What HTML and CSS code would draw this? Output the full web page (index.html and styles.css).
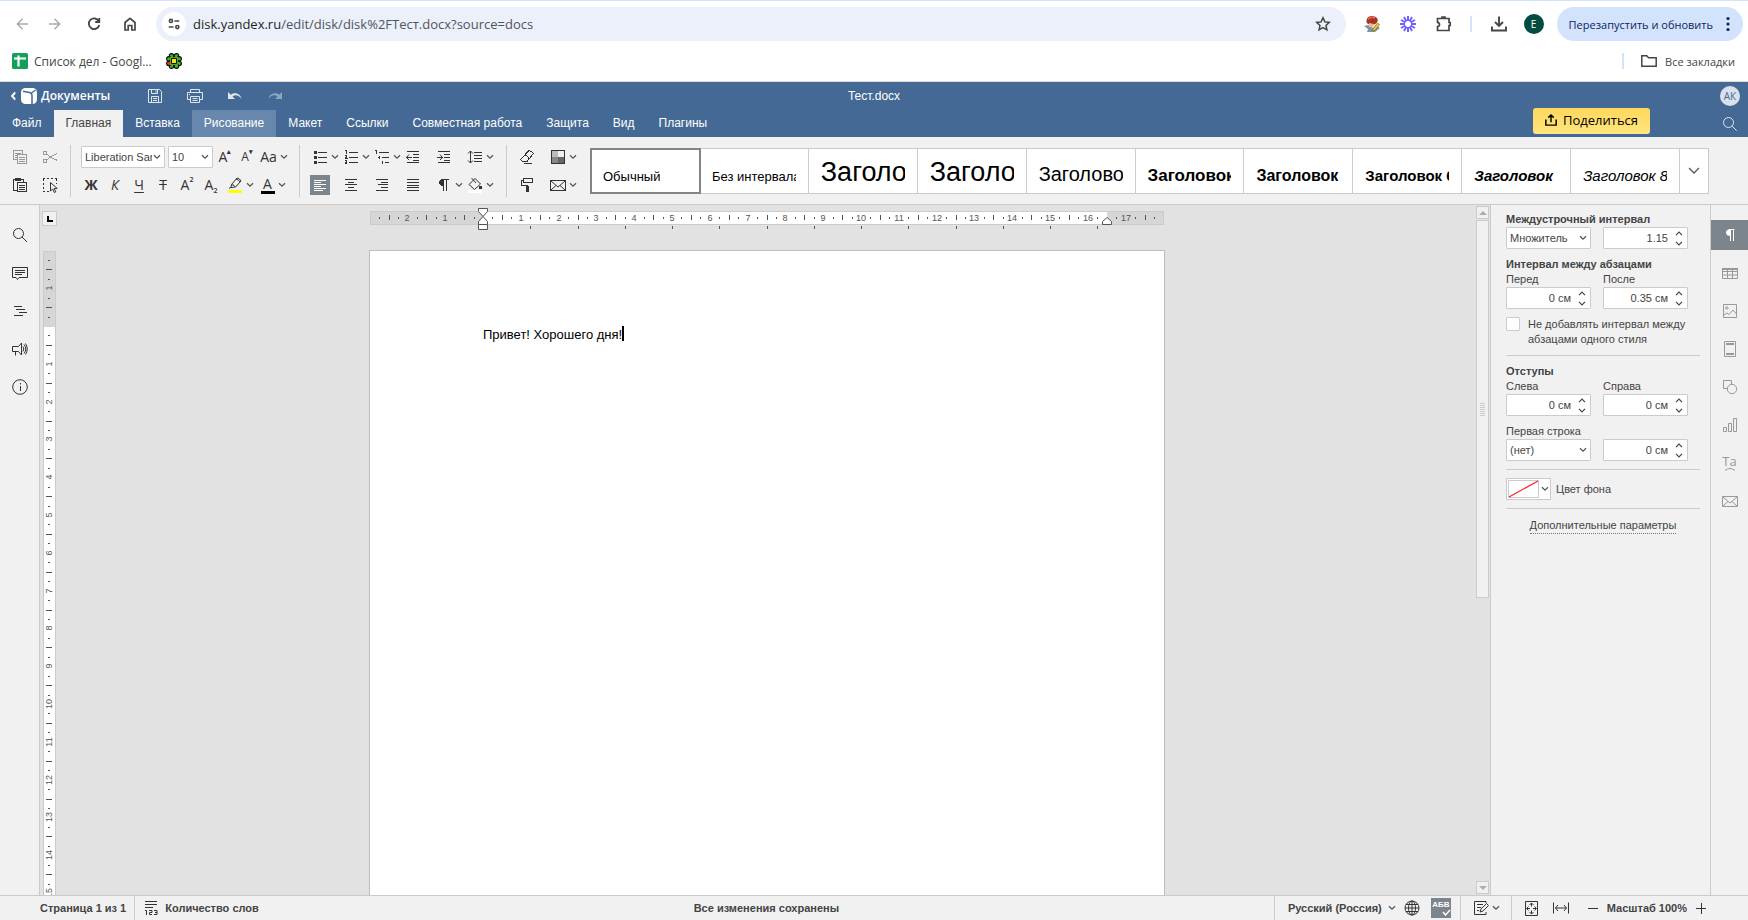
FILE: index.html
```html
<!DOCTYPE html>
<html lang="ru">
<head>
<meta charset="utf-8">
<title>Тест.docx</title>
<link rel="stylesheet" href="styles.css">
</head>
<body>
<svg class="defs" aria-hidden="true">
  <symbol id="caret" viewBox="0 0 8 6"><path d="M1 1.2 4 4.2 7 1.2" fill="none" stroke="#555" stroke-width="1.3"/></symbol>
  <symbol id="up" viewBox="0 0 8 5"><path d="M1 4.2 4 1.2 7 4.2" fill="none" stroke="#444" stroke-width="1.2"/></symbol>
  <symbol id="down" viewBox="0 0 8 5"><path d="M1 .8 4 3.8 7 .8" fill="none" stroke="#444" stroke-width="1.2"/></symbol>
</svg>

<div class="chrome">
  <div class="nav">
    <button class="nb off" aria-label="Назад"><svg viewBox="0 0 16 16"><path d="M14 8H3M8 2.5 2.500 8 8 13.500"/></svg></button>
    <button class="nb off" aria-label="Вперёд"><svg viewBox="0 0 16 16"><path d="M2 8h11M8 2.500 13.500 8 8 13.500"/></svg></button>
    <button class="nb reload" aria-label="Обновить"><svg viewBox="0 0 16 16"><path d="M12.800 5.200A5.300 5.300 0 1 0 13.300 9M13.300 2v4H9.200" stroke-width="1.800"/></svg></button>
    <button class="nb" aria-label="Домой"><svg viewBox="0 0 16 16"><path d="M3 14V6.500L8 2.300l5 4.200V14H9.800V9.500H6.200V14Z" stroke-width="1.700"/></svg></button>
    <div class="omni">
      <button class="tune" aria-label="Сведения о сайте"><svg viewBox="0 0 16 16"><circle cx="4.500" cy="4.500" r="1.800"/><path d="M8.500 4.500H14M2 11.500h5.500"/><circle cx="11.800" cy="11.500" r="1.800"/></svg></button>
      <a class="url" href="#"><b>disk.yandex.ru</b>/edit/disk/disk%2FТест.docx?source=docs</a>
      <button class="nb star" aria-label="В закладки"><svg viewBox="0 0 16 16"><path d="m8 1.800 1.900 4.100 4.400.5-3.300 3 .9 4.400L8 11.600l-3.900 2.200.9-4.400-3.300-3 4.400-.5Z" stroke-width="1.500"/></svg></button>
    </div>
    <div class="exts">
      <button class="nb" aria-label="Расширение Ластик"><svg viewBox="0 0 16 16" class="plain"><path d="M0 10l4-1 5 3 4-2 3 2-5 4H3l1-3Z" fill="#7d96a6"/><path d="M2.500 4.500C3 1 6-.3 9.500.2 13 .7 14.300 3 13.500 5.500 12.500 8 10 9 8 8.500 5 9 2 7.500 2.500 4.500Z" fill="#a93226"/><path d="M4 3.500C6 1 9 1 11 2" stroke="#dc7361" stroke-width="1.500"/><path d="M5 7l5 1-.5 3L5 11Z" fill="#f0ba86"/><path d="m9 13 4.500-6 2 1.500-4.500 6-2.500.5Z" fill="#f3c332" stroke="#80641c" stroke-width=".7"/></svg></button>
      <button class="nb" aria-label="Расширение Звезда"><svg viewBox="0 0 16 16"><path stroke="#6c63ff" stroke-width="2" d="M8 0v5M8 11v5M0 8h5M11 8h5M4 1.100l2.500 4.300M9.500 10.600l2.500 4.300M1.100 4l4.300 2.500M10.600 9.500l4.300 2.500M12 1.100 9.500 5.400M6.500 10.600 4 14.900M14.900 4l-4.300 2.500M5.400 9.500 1.100 12"/></svg></button>
      <button class="nb" aria-label="Расширения"><svg viewBox="0 0 16 16"><path d="M1.500 2.500H13v4h1.200v3H13v5H1.500v-3.800q2-.3 2-2.200t-2-2.200ZM6 2.500V1h3v1.500" stroke-width="1.700"/></svg></button>
    </div>
    <i class="vline"></i>
    <button class="nb dl" aria-label="Загрузки"><svg viewBox="0 0 16 16"><path d="M8 .5v9M4 6l4 4 4-4M1 10.500v4h14v-4" stroke-width="1.900"/></svg></button>
    <button class="profile" aria-label="Профиль">E</button>
    <button class="update">Перезапустить и обновить <svg viewBox="0 0 4 16"><circle cx="2" cy="2.500" r="1.600"/><circle cx="2" cy="8" r="1.600"/><circle cx="2" cy="13.500" r="1.600"/></svg></button>
  </div>
  <div class="marks">
    <a href="#"><svg viewBox="0 0 16 16"><rect width="16" height="16" rx="1.500" fill="#12a05c"/><path d="M2 5.500h12M6.500 2.500v11" stroke="#fff" stroke-width="2.200"/></svg>Список дел - Googl...</a>
    <a href="#" class="flower" aria-label="Закладка"><svg viewBox="0 0 16 16"><g fill="#43b02a" stroke="#111" stroke-width="1.100"><circle cx="5.500" cy="2.800" r="2.200"/><circle cx="10.500" cy="2.800" r="2.200"/><circle cx="2.800" cy="5.800" r="2.200"/><circle cx="13.200" cy="5.800" r="2.200"/><circle cx="13.200" cy="10.400" r="2.200"/><circle cx="5.500" cy="13.200" r="2.200"/><circle cx="10.500" cy="13.200" r="2.200"/><circle cx="2.800" cy="10.400" r="2.200" fill="#f0351b"/></g><path d="M4 4h8v8H4Z" fill="#43b02a"/><path d="M5.500 5.500h5v5h-5Z" fill="#ffe600" stroke="#111"/></svg></a>
    <i class="vline"></i>
    <a href="#" class="all"><svg viewBox="0 0 16 16" fill="none" stroke="#444746" stroke-width="1.500"><path d="M.8 2.800h5l1.700 2h7.700v8.400H.8Z"/></svg>Все закладки</a>
  </div>
</div>

<header class="head">
  <div class="top">
    <a class="brand" href="#"><svg class="back" viewBox="0 0 5 10"><path d="M4.200 1.500 1 5l3.200 3.500" fill="none" stroke="#fff" stroke-width="1.900"/></svg><svg class="logo" viewBox="0 0 16 16"><rect width="16" height="16" rx="4.500" fill="#fff"/><path d="M2 3.200 8.500 4.500q2.500.6 2.500 3V16" fill="none" stroke="#446995" stroke-width="1.500"/><path d="M10.500 5 14.500 2" fill="none" stroke="#446995" stroke-width="1.300"/></svg>Документы</a>
    <div class="quick">
      <button class="save" aria-label="Сохранить"><svg viewBox="0 0 14 14"><path d="M.5.5h11l2 2v11H.5ZM3.500.5v4h6v-4M3.500 13.500V7.500h7v6M5 9.500h4M5 11.500h4M8 1.500v2"/></svg></button>
      <button class="print" aria-label="Печать"><svg viewBox="0 0 16 14"><path d="M3.500 3.500V.5h9v3M3.500 10.500h-3v-7h15v7h-3M3.500 7.500h9v6h-9ZM2 5.500h1M5.500 9.500h5M5.500 11.500h5"/></svg></button>
      <button aria-label="Отменить"><svg viewBox="0 0 14 10"><path d="M0 1v7h7L4.500 5.500C7 3.500 11 4 13.500 8 12.500 3 7.500.5 2.800 3.800Z" fill="#dfe6ee" stroke="none"/></svg></button>
      <button aria-label="Повторить" disabled><svg viewBox="0 0 14 10"><path d="M14 1v7H7l2.500-2.500C7 3.500 3 4 .5 8 1.500 3 6.500.5 11.200 3.800Z" fill="#8fa5bf" stroke="none"/></svg></button>
    </div>
    <h1>Тест.docx</h1>
    <span class="user">АК</span>
  </div>
  <div class="tabrow">
    <nav class="tabs"><button>Файл</button><button class="on">Главная</button><button>Вставка</button><button class="hov">Рисование</button><button>Макет</button><button>Ссылки</button><button>Совместная работа</button><button>Защита</button><button>Вид</button><button>Плагины</button></nav>
    <button class="share"><svg viewBox="0 0 14 14"><path d="M7 9.500V1.500M3.800 4.200 7 1.200l3.200 3M1 6.500V13h12V6.500" fill="none" stroke="#000" stroke-width="1.700"/></svg>Поделиться</button>
    <button class="find" aria-label="Поиск"><svg viewBox="0 0 14 14"><circle cx="5.500" cy="5.500" r="5" /><path d="m9.200 9.200 4.500 4.500"/></svg></button>
  </div>
</header>

<section class="bar">
  <div class="grp clip">
    <div class="row"><button class="off" aria-label="Копировать"><svg viewBox="0 0 16 16"><path d="M5 10.500H1.500v-9h9V5M3 4.500h6M3 6.500h1.500M3 8.500h1.500M5.500 5.500h9v9h-9ZM7 8.500h6M7 10.500h6M7 12.500h6"/></svg></button><button class="off" aria-label="Вырезать"><svg viewBox="0 0 16 16" class="soft"><circle cx="3" cy="4" r="2"/><circle cx="3" cy="12" r="2"/><path d="M5 4.800 8 8l7.500 3.500M5 11.200 8 8l7.500-3.500"/></svg></button></div>
    <div class="row"><button aria-label="Вставить"><svg viewBox="0 0 16 16"><path d="M5 13.500H1.500v-11H3M9 2.500h2.500V5M5.500 5.500h9v9h-9ZM7 8.500h6M7 10.500h6M7 12.500h6"/><path d="M3 1h6v3H3Z" fill="#333" stroke="none"/></svg></button><button aria-label="Выделить"><svg viewBox="0 0 16 16"><path d="M1 1.500h14M1.500 2v12M14.500 2v5M1 14.500h7" stroke-dasharray="2 2"/><path d="M8.500 5.500v8.500l2.200-2 1.600 3.500 1.500-.7-1.600-3.300h3Z" class="soft" fill="#f1f1f1"/></svg></button></div>
  </div>
  <i class="sep"></i>
  <div class="grp font">
    <div class="row">
      <span class="combo fam"><select aria-label="Шрифт"><option>Liberation Sans</option></select><svg class="ca"><use href="#caret"/></svg></span>
      <span class="combo size"><select aria-label="Размер шрифта"><option>10</option></select><svg class="ca"><use href="#caret"/></svg></span>
      <button class="t w24" aria-label="Увеличить размер">A<sup>▴</sup></button><button class="t w20 sm" aria-label="Уменьшить размер">A<sup>▾</sup></button><button class="t drop" aria-label="Регистр">Aa<svg class="ca"><use href="#caret"/></svg></button>
    </div>
    <div class="row">
      <button class="t w24 b">Ж</button><button class="t w24 it">К</button><button class="t w24 un">Ч</button><button class="t w24 st">Т</button><button class="t w24">A<sup>2</sup></button><button class="t w24">A<sub>2</sub></button><button class="drop" aria-label="Цвет выделения"><svg viewBox="0 0 16 16"><path class="soft" d="M4.500 7.500 10 1q3 .5 4 3L8.500 10 4 10.500ZM4.500 7.500q3 .5 4 2.500M9 2q3 .8 4 3M4 10 2 11.500"/><path d="M1 13h14v3H1Z" fill="#ff0" stroke="none"/></svg><svg class="ca"><use href="#caret"/></svg></button><button class="drop fc" aria-label="Цвет шрифта"><span>A</span><svg class="ca"><use href="#caret"/></svg></button>
    </div>
  </div>
  <i class="sep"></i>
  <div class="grp para">
    <div class="row">
      <button aria-label="Маркеры"><svg viewBox="0 0 16 16"><path d="M6 3.500h9M6 8.500h9M6 13.500h9"/><path d="M2 2h3v3H2ZM2 7h3v3H2ZM2 12h3v3H2Z" fill="#333" stroke="none"/></svg><svg class="ca"><use href="#caret"/></svg></button>
      <button aria-label="Нумерация"><svg viewBox="0 0 16 16"><path d="M6 3.500h9M6 8.500h9M6 13.500h9M2 1.500h1.500V5M1.500 6.500h2v2h-1v1h2M1.500 11.500h2v3h-2M2 13.500h1"/></svg><svg class="ca"><use href="#caret"/></svg></button>
      <button aria-label="Многоуровневый список"><svg viewBox="0 0 16 16"><path d="M5 3.500h10M8 8.500h7M11 13.500h4M1 1.500h1.500V5M5 7v3M4 8.500h2M8.500 12v3"/></svg><svg class="ca"><use href="#caret"/></svg></button>
      <button aria-label="Уменьшить отступ"><svg viewBox="0 0 16 16"><path d="M2 2.500h12M8 5.500h6M8 8.500h6M8 11.500h6M2 13.500h12M1 8.500h6"/><path class="soft" d="M4 5.500 1.500 8.500 4 11"/></svg></button>
      <button aria-label="Увеличить отступ"><svg viewBox="0 0 16 16"><path d="M2 2.500h12M8 5.500h6M8 8.500h6M8 11.500h6M2 13.500h12M1 8.500h6"/><path class="soft" d="M4 5.500 6.500 8.500 4 11"/></svg></button>
      <button aria-label="Междустрочный интервал"><svg viewBox="0 0 16 16"><path d="M7 3.500h8M7 6.500h8M7 9.500h8M7 12.500h8M3.500 2v12"/><path class="soft" d="M1 4.500 3.500 2 6 4.500M1 11.500 3.500 14 6 11.500"/></svg><svg class="ca"><use href="#caret"/></svg></button>
    </div>
    <div class="row">
      <button class="act" aria-label="По левому краю"><svg viewBox="0 0 16 16"><path d="M2 3.500h12M2 5.500h7M2 7.500h12M2 9.500h7M2 11.500h12M2 13.500h9"/></svg></button>
      <button aria-label="По центру"><svg viewBox="0 0 16 16"><path d="M2 2.500h12M5 5.500h6M2 7.500h12M5 10.500h6M2 13.500h12"/></svg></button>
      <button aria-label="По правому краю"><svg viewBox="0 0 16 16"><path d="M2 2.500h12M7 5.500h7M4 7.500h10M7 10.500h7M2 13.500h12"/></svg></button>
      <button aria-label="По ширине"><svg viewBox="0 0 16 16"><path d="M2 2.500h12M2 5.500h12M2 8.500h12M2 10.500h12M2 13.500h12"/></svg></button>
      <button aria-label="Непечатаемые символы"><svg viewBox="0 0 16 16"><path d="M7 2.500h6M7.500 2v12M10.500 2v12"/><path d="M8 2v7Q3 9 3 5.500T8 2Z" fill="#333" stroke="none"/></svg><svg class="ca"><use href="#caret"/></svg></button>
      <button aria-label="Заливка"><svg viewBox="0 0 16 16"><path class="soft" d="M2 7.500 8 1.500l5.500 5.500-6 5.500ZM4.500 1 9 6"/><path d="M12 9h2.500v3H12Z" fill="#333" stroke="none"/><path d="M1 13h14v3H1Z" fill="#fff" stroke="none"/></svg><svg class="ca"><use href="#caret"/></svg></button>
    </div>
  </div>
  <i class="sep"></i>
  <div class="grp misc">
    <div class="row"><button aria-label="Очистить стиль"><svg viewBox="0 0 16 16" class="soft"><path d="M2 10 9.500 2q2.500-1 4.800 2.500L8 12.500H4Q1.500 12 2 10ZM6 6q3 .5 4 4M4.500 14.500H13"/></svg></button><button aria-label="Цветовая схема"><svg viewBox="0 0 16 16"><path d="M2 2h6v6H2Z" fill="#bbb" stroke="none"/><path d="M8 2h6v6H8Z" fill="#eee" stroke="none"/><path d="M2 8h6v6H2Z" fill="#888" stroke="none"/><path d="M8 8h6v6H8Z" fill="#666" stroke="none"/><path d="M1.500 1.500h13v13h-13Z"/></svg><svg class="ca"><use href="#caret"/></svg></button></div>
    <div class="row"><button aria-label="Копировать стиль"><svg viewBox="0 0 16 16"><path d="M4.500 1.500h9v4h-9ZM4 3.500H2.500v5h6V10"/><path d="M7 9h3v6H7Z" fill="#333" stroke="none"/></svg></button><button aria-label="Слияние"><svg viewBox="0 0 16 16"><path d="M.5 3.500h15v10H.5Z"/><path class="soft" d="m1 4 7 6 7-6M1 13l5-4.500M15 13l-5-4.500"/></svg><svg class="ca"><use href="#caret"/></svg></button></div>
  </div>
  <div class="gallery">
    <button class="s0 sel"><span>Обычный</span></button><button class="s0"><span>Без интервала</span></button><button class="s1"><span>Заголовок 1</span></button><button class="s1"><span>Заголовок 2</span></button><button class="s3"><span>Заголовок 3</span></button><button class="s4"><span>Заголовок 4</span></button><button class="s5"><span>Заголовок 5</span></button><button class="s6"><span>Заголовок 6</span></button><button class="s7"><span>Заголовок 7</span></button><button class="s8"><span>Заголовок 8</span></button><button class="more" aria-label="Ещё стили"><svg viewBox="0 0 12 8"><path d="m1 1 5 5 5-5" fill="none" stroke="#555" stroke-width="1.300"/></svg></button>
  </div>
</section>

<main class="work">
  <aside class="left">
    <button aria-label="Поиск"><svg viewBox="0 0 16 16"><circle cx="6.500" cy="6.500" r="5"/><path d="m10 10 5 5"/></svg></button>
    <button aria-label="Комментарии"><svg viewBox="0 0 16 16"><path d="M.5 2.500h15v10H7l-1.500 2-1.500-2H.5ZM3 5.500h10M3 7.500h10M3 9.500h7"/></svg></button>
    <button aria-label="Заголовки"><svg viewBox="0 0 16 16"><path d="M2 3.500h8M4 6.500h9M7 9.500h8M2 12.500h9"/></svg></button>
    <button aria-label="Обратная связь"><svg viewBox="0 0 16 16"><path d="M.5 5.500h6l3-3.500v12l-3-3.500h-6ZM3.500 10.500v4M11 5.500q1.500 2.500 0 5M12 3.500q3.500 4.500 0 9M13.500 2.500q3.500 5.500 0 11"/></svg></button>
    <button aria-label="О программе"><svg viewBox="0 0 16 16"><circle cx="8" cy="8" r="7.300"/><path d="M8.500 7v5M8.500 4v1.500"/></svg></button>
  </aside>
  <div class="editor">
    <div class="corner"><svg viewBox="0 0 6 6"><path d="M0 0h2v4h4v2H0Z"/></svg></div>
    <div class="hr"><svg id="hruler" width="796" height="30"></svg></div>
    <div class="vr"><svg id="vruler" width="13" height="644"></svg></div>
    <div class="canvas"><article class="page"><p>Привет! Хорошего дня!<i class="cur"></i></p></article></div>
    <div class="scroll"><button aria-label="Вверх"><svg viewBox="0 0 8 4"><path d="M0 4 4 0l4 4Z"/></svg></button><div class="thumb"><i></i></div><button class="dn" aria-label="Вниз"><svg viewBox="0 0 8 4"><path d="M0 0h8L4 4Z"/></svg></button></div>
  </div>
  <aside class="panel">
    <h2>Междустрочный интервал</h2>
    <div class="pair"><span class="combo"><select aria-label="Междустрочный интервал"><option>Множитель</option></select><svg class="ca"><use href="#caret"/></svg></span><span class="spin"><input aria-label="Значение интервала" value="1.15"><svg><use href="#up"/></svg><svg><use href="#down"/></svg></span></div>
    <h2 class="gap">Интервал между абзацами</h2>
    <div class="pair"><label for="b">Перед</label><label for="a">После</label></div>
    <div class="pair"><span class="spin"><input id="b" value="0 см"><svg><use href="#up"/></svg><svg><use href="#down"/></svg></span><span class="spin"><input id="a" value="0.35 см"><svg><use href="#up"/></svg><svg><use href="#down"/></svg></span></div>
    <label class="chk"><input type="checkbox">Не добавлять интервал между абзацами одного стиля</label>
    <hr>
    <h2>Отступы</h2>
    <div class="pair"><label for="l">Слева</label><label for="r">Справа</label></div>
    <div class="pair"><span class="spin"><input id="l" value="0 см"><svg><use href="#up"/></svg><svg><use href="#down"/></svg></span><span class="spin"><input id="r" value="0 см"><svg><use href="#up"/></svg><svg><use href="#down"/></svg></span></div>
    <div class="pair gap"><label for="f">Первая строка</label></div>
    <div class="pair"><span class="combo"><select id="f"><option>(нет)</option></select><svg class="ca"><use href="#caret"/></svg></span><span class="spin"><input aria-label="Отступ первой строки" value="0 см"><svg><use href="#up"/></svg><svg><use href="#down"/></svg></span></div>
    <hr>
    <div class="fill"><button id="bg" aria-label="Цвет фона"><svg viewBox="0 0 31 18"><path d="M.5.5h30v17H.5Z" fill="#fff" stroke="#cbcbcb"/><path d="M1 17 30 1" stroke="#f22" stroke-width="1.300"/></svg><svg class="ca"><use href="#caret"/></svg></button><label for="bg">Цвет фона</label></div>
    <hr>
    <a class="adv" href="#">Дополнительные параметры</a>
  </aside>
  <aside class="right">
    <button class="on" aria-label="Абзац"><svg viewBox="0 0 16 16"><path d="M7 2.500h5.500M8.500 2v12M11.500 2v12"/><path d="M9 2v7Q4 9 4 5.500T9 2Z" fill="#fff" stroke="none"/></svg></button>
    <button aria-label="Таблица"><svg viewBox="0 0 16 16"><path d="M.5 3.500h15v10H.5ZM0 6.500h16M0 10h16M5.500 3v10M10.500 3v10"/><path d="M0 3h16v2H0Z" fill="#999" stroke="none"/></svg></button>
    <button aria-label="Изображение"><svg viewBox="0 0 16 16"><path d="M1.500 1.500h13v13h-13ZM2 12l3-2 2 1.500 4-4.500 3.500 4"/><circle cx="4.800" cy="5" r="1.200"/></svg></button>
    <button aria-label="Колонтитулы"><svg viewBox="0 0 16 16"><path d="M2.500.5h11v15h-11Z"/><path d="M4 3h8M4 13h8" stroke-width="2"/></svg></button>
    <button aria-label="Фигура"><svg viewBox="0 0 16 16"><path d="M5 9.500H1.500v-8h8V5"/><circle cx="10" cy="10" r="4.700"/></svg></button>
    <button aria-label="Диаграмма"><svg viewBox="0 0 16 16"><path d="M1.500 10.500h3v4h-3ZM6.500 6.500h3v8h-3ZM11.500 1.500h3v13h-3Z"/></svg></button>
    <button class="ta" aria-label="Text Art">Ta<svg viewBox="0 0 12 4"><path d="M1 3.500q5-4 10 0"/></svg></button>
    <button aria-label="Слияние"><svg viewBox="0 0 16 16"><path d="M.5 3.500h15v10H.5ZM1 4l7 6 7-6M1 13l5-4.500M15 13l-5-4.500"/></svg></button>
  </aside>
</main>

<footer class="status">
  <span class="pg">Страница 1 из 1</span><i></i>
  <button class="cnt"><svg viewBox="0 0 14 16"><path d="M1 1.500h12M1 4.500h12M1 7.500h8M1 10.500h1.500V15M5 10.500h3v2H5.500v2H8M10 10.500h3v4h-3M11 12.500h2"/></svg>Количество слов</button>
  <span class="saved">Все изменения сохранены</span><i></i>
  <button class="lang">Русский (Россия)<svg class="ca"><use href="#caret"/></svg></button>
  <button class="globe" aria-label="Язык документа"><svg viewBox="0 0 16 16" class="soft"><circle cx="8" cy="8" r="7"/><ellipse cx="8" cy="8" rx="3.500" ry="7"/><path d="M8 1v14M1 8h14M2 4.500h12M2 11.500h12"/></svg></button>
  <button class="spell" aria-label="Проверка орфографии">АБВ<svg viewBox="0 0 9 7"><path d="m1 3 2.500 3L8 1" fill="none" stroke="#fff" stroke-width="1.500"/></svg></button><i></i>
  <button class="track" aria-label="Отслеживание"><svg viewBox="0 0 16 16"><path d="M13 3V1.500H1.500v13H13V12M4 4.500h6M4 7.500h4M4 10.500h2"/><path class="soft" d="m7 12 1-3 5.500-5.500 2 2L10 11Z"/></svg><svg class="ca"><use href="#caret"/></svg></button><i></i>
  <button class="fit" aria-label="По размеру страницы"><svg viewBox="0 0 16 16"><path d="M2.500 1.500h12v14h-12ZM8.500 3v3.500M8.500 10.500V14M4 8.500h3M10 8.500h3"/><path d="M6.500 5 8.500 3l2 2M6.500 12l2 2 2-2M5.500 6.500l-2 2 2 2M11.500 6.500l2 2-2 2"/></svg></button>
  <button class="fit" aria-label="По ширине"><svg viewBox="0 0 16 16"><path d="M.5 2.500v11M15.500 2.500v11M2.500 8h11"/><path class="soft" d="M5 5 2.500 8 5 11M11 5l2.500 3-2.500 3"/></svg></button>
  <button class="zm" aria-label="Уменьшить"><svg viewBox="0 0 12 12"><path d="M1 6.500h10"/></svg></button>
  <span>Масштаб 100%</span>
  <button class="zm" aria-label="Увеличить"><svg viewBox="0 0 12 12"><path d="M1 6.500h10M6.500 1v11"/></svg></button>
</footer>
<script src="rulers.js"></script>
</body>
</html>
```
FILE: styles.css
```css
* { box-sizing: border-box; }
html, body { height: 100%; margin: 0; }
body { display: flex; flex-direction: column; overflow: hidden; background: #f1f1f1; color: #444; font: 11px/15px "Liberation Sans", Arial, sans-serif; }
button, input, select { font: inherit; color: inherit; border: 0; background: none; padding: 0; margin: 0; }
button { display: inline-flex; align-items: center; justify-content: center; flex: none; white-space: nowrap; }
a { color: inherit; text-decoration: none; }
svg { flex: none; display: block; }
.defs { position: absolute; width: 0; height: 0; }
.ca { width: 8px; height: 6px; }

.chrome { flex: none; height: 82px; background: #fff; border-top: 1px solid #d3e3fd; border-bottom: 1px solid #dcdcdc; font-family: "Open Sans", "Noto Sans", sans-serif; color: #444746; }
.nav { display: flex; align-items: center; height: 46px; padding: 0 5px 0 12px; }
.nb { width: 20px; height: 20px; margin-right: 16px; }
.nb svg { width: 16px; height: 16px; fill: none; stroke: #444746; stroke-width: 1.6; }
.nb.off { margin-right: 12px; }
.nb.off svg { stroke: #a9abaa; width: 15px; }
.nb svg.plain { stroke: none; }
.nb.off + .reload { margin-left: 8px; }
.omni { flex: 1; display: flex; align-items: center; height: 34px; border-radius: 17px; background: #ebf0fa; padding: 0 13px 0 6px; margin-right: 16px; }
.tune { width: 24px; height: 24px; border-radius: 12px; background: #fff; margin-right: 7px; }
.tune svg { width: 14px; height: 14px; fill: none; stroke: #444746; stroke-width: 1.8; }
.url { flex: 1; font-size: 13px; line-height: 20px; color: #50555c; }
.url b { font-weight: 400; color: #1f1f1f; }
.omni .star { margin: 0; }
.exts { display: flex; gap: 16px; }
.exts .nb { margin: 0; }
.vline { width: 2px; height: 16px; background: #d3e3fd; }
.nav .vline { margin: 0 17px 0 16px; }
.nb.dl { margin-right: 15px; }
.profile { width: 20px; height: 20px; border-radius: 10px; background: #004d40; color: #fff; font-size: 10px; margin-right: 13px; }
.update { height: 34px; border-radius: 17px; background: #d3e3fd; color: #0a2460; font-size: 11px; padding: 0 13px 0 12px; gap: 13px; }
.update svg { width: 4px; height: 16px; fill: #0a2460; }
.marks { display: flex; align-items: center; height: 28px; padding: 0 13px 0 12px; font-size: 12px; }
.marks a { display: flex; align-items: center; gap: 6px; }
.marks svg { width: 16px; height: 16px; }
.marks .flower { margin: 0 auto 0 14px; }
.marks .vline { margin-right: 17px; }
.marks .all { font-size: 11px; gap: 8px; }

.head { flex: none; background: #446995; color: #fff; font-size: 12px; }
.top { display: flex; align-items: center; height: 28px; padding: 0 8px 0 11px; position: relative; }
.brand { display: flex; align-items: center; font: 600 12px/18px "Open Sans", sans-serif; width: 134px; }
.back { width: 5px; height: 10px; margin-right: 5px; }
.logo { width: 16px; height: 16px; margin-right: 4px; }
.quick { display: flex; }
.quick button { width: 40px; }
.quick .save { width: 20px; }
.quick .print { width: 60px; margin-right: -10px; }
.quick svg { height: 14px; width: 14px; fill: none; stroke: #dfe6ee; }
.quick .print svg { width: 16px; }
.quick button:nth-child(n+3) svg { height: 10px; }
.quick, .brand, .user { z-index: 1; }
.top h1 { position: absolute; left: 0; right: 0; margin: 0; text-align: center; font: 12px/28px "Liberation Sans", sans-serif; }
.user { margin-left: auto; width: 20px; height: 20px; border-radius: 10px; background: #dae1ea; color: #446995; font: 10px/20px "Open Sans", sans-serif; text-align: center; }
.tabrow { display: flex; height: 27px; align-items: center; padding-right: 11px; }
.tabs { display: flex; flex: 1; align-self: stretch; }
.tabs button { padding: 0 12px; }
.tabs .on { background: #f1f1f1; color: #444; }
.tabs .hov { background: #6787ad; }
.share { height: 26px; width: 117px; margin: -5px 73px 0 0; padding-bottom: 2px; border-radius: 3px; background: linear-gradient(#ffd75c, #ffe680); color: #000; font: 13px/18px "Open Sans", sans-serif; gap: 6px; }
.share svg { width: 12px; height: 14px; }
.find svg { width: 14px; height: 14px; fill: none; stroke: #dfe6ee; }

.bar { flex: none; display: flex; align-items: center; height: 68px; border-bottom: 1px solid #cbcbcb; }
.bar .sep { flex: none; width: 1px; height: 52px; background: #cbcbcb; }
.grp { flex: none; display: flex; flex-direction: column; gap: 6px; padding-top: 1px; }
.row { display: flex; align-items: center; height: 22px; }
.bar .row svg:not(.ca) { width: 16px; height: 16px; fill: none; stroke: #333; shape-rendering: crispEdges; }
.bar .row .soft { shape-rendering: auto; }
.clip { padding-left: 5px; padding-right: 5px; }
.clip button { width: 30px; }
.bar .row .off svg { stroke: #999; }
.font { padding-left: 8px; padding-right: 8px; }
.font .combo { margin-right: 3px; }
.font .combo:first-child { margin-left: 2px; }
.combo { position: relative; display: inline-flex; height: 22px; border: 1px solid #cbcbcb; border-radius: 1px; background: #fff; }
.combo select { width: 100%; appearance: none; padding: 0 12px 0 3px; overflow: hidden; }
.combo .ca { position: absolute; right: 3px; top: 7px; }
.combo.fam { width: 84px; }
.combo.size { width: 45px; margin-right: 0; }
.t { font: 14px/18px "Open Sans", sans-serif; color: #333; }
.t sup, .t sub { font-size: 7px; line-height: 7px; font-weight: 600; }
.t sup { align-self: flex-start; }
.t sub { align-self: flex-end; }
.w24 { width: 24px; }
.w20 { width: 20px; }
.sm { font-size: 12px; }
.b { font-weight: 700; }
.it { font-style: italic; }
.un { text-decoration: underline; text-underline-offset: 2px; }
.st { text-decoration: line-through; }
.drop { width: 34px; gap: 3px; }
.fc { width: 32px; }
.fc span { width: 14px; border-bottom: 3px solid #000; font: 14px/14px "Open Sans", sans-serif; color: #333; }
.para { padding-left: 12px; padding-right: 3px; width: 206px; }
.misc { padding-left: 12px; padding-right: 9px; }
.para button, .misc button { width: 31px; justify-content: flex-start; gap: 3px; }
.para .act { width: 16px; margin-right: 15px; height: 16px; background: #7d858c; box-shadow: 0 0 0 2px #7d858c; }
.bar .row .act svg { stroke: #fff; }
.gallery { display: flex; height: 46px; min-width: 0; margin-right: 39px; flex: 1; border: 1px solid #cbcbcb; background: #fff; color: #000; }
.gallery button { flex: 1 1 0; min-width: 0; border-right: 1px solid #cbcbcb; align-items: baseline; justify-content: flex-start; padding: 0 12px; overflow: hidden; }
.gallery button::before { content: ""; height: 32px; width: 0; }
.gallery span { overflow: hidden; line-height: 30px; }
.gallery .sel { outline: 2px solid #848484; outline-offset: -1px; }
.gallery .more { flex: none; width: 28px; border: 0; padding: 0; align-items: center; justify-content: center; }
.gallery .more::before { content: none; }
.more svg { width: 12px; height: 8px; }
.s0 { font-size: 13px; }
.s1 { font-size: 27px; }
.s3 { font-size: 20px; }
.s4 { font-size: 17px; font-weight: 700; }
.s5 { font-size: 16px; font-weight: 700; }
.s6, .s7, .s8 { font-size: 15px; font-weight: 700; }
.s7, .s8 { font-style: italic; }
.s8 { font-weight: 400; }

.work { flex: 1; min-height: 0; display: flex; }
.left { width: 40px; border-right: 1px solid #cbcbcb; display: flex; flex-direction: column; align-items: center; gap: 18px; padding-top: 20px; }
.left button { height: 20px; }
.left svg { width: 16px; height: 16px; fill: none; stroke: #333; }
.editor { flex: 1; min-width: 0; display: grid; grid-template: 45px 1fr / 18px 1fr 14px; background: #e2e2e2; overflow: hidden; }
.corner { width: 15px; height: 15px; margin: 6px 0 0 2px; border: 1px solid #cbcbcb; background: #f1f1f1; display: grid; place-items: center; }
.corner svg { width: 6px; height: 6px; }
.hr { display: flex; justify-content: center; }
.vr { grid-area: 2 / 1; overflow: hidden; padding: 1px 0 0 3px; min-height: 0; }
.canvas { grid-area: 2 / 2; display: flex; justify-content: center; min-height: 0; }
.page { width: 796px; background: #fff; border: 1px solid #bbbec2; border-bottom: 0; padding: 75px 56px 0 113px; color: #000; font-size: 13px; line-height: 17px; }
.page p { margin: 0; display: flex; }
.cur { width: 2px; height: 15px; background: #000; }
.scroll { grid-area: 1 / 3 / 3 / 4; display: flex; flex-direction: column; padding: 1px 1px 1px 0; }
.scroll button { width: 13px; height: 13px; border: 1px solid #cbcbcb; background: #f1f1f1; }
.scroll .dn { margin-top: auto; }
.scroll button svg { width: 8px; height: 4px; fill: #adadad; }
.thumb { width: 13px; height: 55%; margin-top: 1px; border: 1px solid #cbcbcb; background: #f1f1f1; display: grid; place-items: center; }
.thumb i { width: 5px; height: 13px; background: repeating-linear-gradient(#cbcbcb 0 1px, transparent 1px 2px); }
.panel { width: 220px; flex: none; border-left: 1px solid #cbcbcb; padding: 7px 10px 0 15px; }
.panel h2 { font-size: 11px; line-height: 15px; margin: 0; }
.panel .gap { margin-top: 8px; }
.pair { display: grid; grid-template-columns: 85px 85px; gap: 12px; }
.spin { display: grid; grid-template: 1fr 1fr / 1fr 17px; height: 22px; border: 1px solid #cbcbcb; border-radius: 1px; background: #fff; justify-items: center; align-items: center; }
.spin input { grid-row: 1 / 3; width: 100%; text-align: right; padding-right: 2px; min-width: 0; }
.spin svg { width: 8px; height: 5px; }
.chk { display: flex; gap: 8px; margin-top: 8px; padding-right: 12px; }
.chk input { appearance: none; flex: none; width: 14px; height: 14px; border: 1px solid #cbcbcb; border-radius: 1px; background: #fff; }
.panel hr { border: 0; border-top: 1px solid #cbcbcb; margin: 8px 0; }
.fill { display: flex; align-items: center; gap: 5px; }
.fill button { width: 45px; height: 22px; border: 1px solid #cbcbcb; background: #fff; gap: 2px; }
.fill button svg:first-child { width: 31px; height: 18px; }
.adv { display: table; margin: 0 auto; border-bottom: 1px dotted #777; line-height: 16px; }
.right { width: 38px; flex: none; border-left: 1px solid #cbcbcb; display: flex; flex-direction: column; gap: 8px; padding-top: 15px; }
.right button { height: 30px; }
.right svg { width: 16px; height: 16px; fill: none; stroke: #999; }
.right .on { background: #7d858c; }
.right .on svg { stroke: #fff; }
.right .ta { flex-direction: column; color: #999; font: 13px/12px "Open Sans", sans-serif; }
.right .ta svg { width: 12px; height: 4px; }

.status { flex: none; display: flex; align-items: center; height: 25px; border-top: 1px solid #cbcbcb; font-weight: 700; padding: 0 41px 0 40px; }
.status svg:not(.ca) { width: 16px; height: 16px; fill: none; stroke: #333; }
.status > i { width: 1px; align-self: stretch; background: #cbcbcb; }
.pg { padding-right: 8px; }
.cnt { gap: 6px; padding-left: 8px; }
.saved { flex: 1; text-align: center; }
.lang { gap: 6px; padding: 0 8px 0 13px; }
.globe { margin-right: 11px; }
.spell { width: 20px; height: 20px; background: #7d858c; color: #fff; flex-direction: column; font-size: 8px; line-height: 8px; margin-right: 9px; }
.status .spell svg { width: 9px; height: 7px; align-self: flex-end; }
.track { gap: 3px; padding: 0 11px 0 12px; }
.fit { margin-left: 11px; }
.fit + .fit { margin-left: 14px; }
.zm { width: 12px; margin: 0 8px 0 18px; }
.zm:last-child { margin: 0 0 0 8px; }
.status .zm svg { width: 12px; height: 12px; }
```
FILE: rulers.js
```js
const CM = 37.8;
const rect = (x, y, w, h, f) => `<rect x="${x}" y="${y}" width="${w}" height="${h}" fill="${f}"/>`;

function horizontal(svg) {
  const zero = 114, end = 738;
  let s = rect(1, 6, 794, 14, '#cbcbcb') + rect(2, 7, 792, 12, '#d6d6d6') + rect(zero, 7, end - zero, 12, '#fff');
  for (let q = -11; q <= 71; q++) {
    const x = Math.round(zero + q * CM / 4);
    if (x < 6 || x > 790 || q === 0 || q === 66) continue;
    if (q % 4 === 0) s += `<text x="${x}" y="16" text-anchor="middle">${Math.abs(q / 4)}</text>`;
    else s += q % 2 === 0 ? rect(x, 10, 1, 5, '#555') : rect(x, 12, 1, 2, '#555');
  }
  for (let i = 1; i <= 13; i++) s += rect(Math.round(zero + i * 47.25), 21, 1, 3, '#555');
  s += '<g fill="#fff" stroke="#555"><path d="M109.500 3.500h9v3l-4.500 5-4.500-5Z"/><path d="M114 11.500l4.500 5v3h-9v-3Z"/><path d="M109.500 19.500h9v5h-9Z"/>' +
       '<path d="M738 12.500l4.500 4v3h-9v-3Z"/></g>';
  svg.innerHTML = s;
}

function vertical(svg) {
  const zero = 76;
  let s = rect(0, 0, 13, 644, '#cbcbcb') + rect(1, 1, 11, 643, '#fff') + rect(1, 1, 11, zero - 1, '#d6d6d6');
  for (let q = -7; q <= 60; q++) {
    const y = Math.round(zero + q * CM / 4) - 1;
    if (q === 0) continue;
    if (q % 4 === 0) s += `<text transform="translate(9 ${y}) rotate(-90)" text-anchor="middle">${Math.abs(q / 4)}</text>`;
    else s += q % 2 === 0 ? rect(3, y, 6, 1, '#555') : rect(5, y, 2, 1, '#555');
  }
  svg.innerHTML = s;
}

for (const id of ['hruler', 'vruler']) {
  const el = document.getElementById(id);
  el.setAttribute('font-size', '9');
  el.setAttribute('fill', '#555');
  (id === 'hruler' ? horizontal : vertical)(el);
}
```
